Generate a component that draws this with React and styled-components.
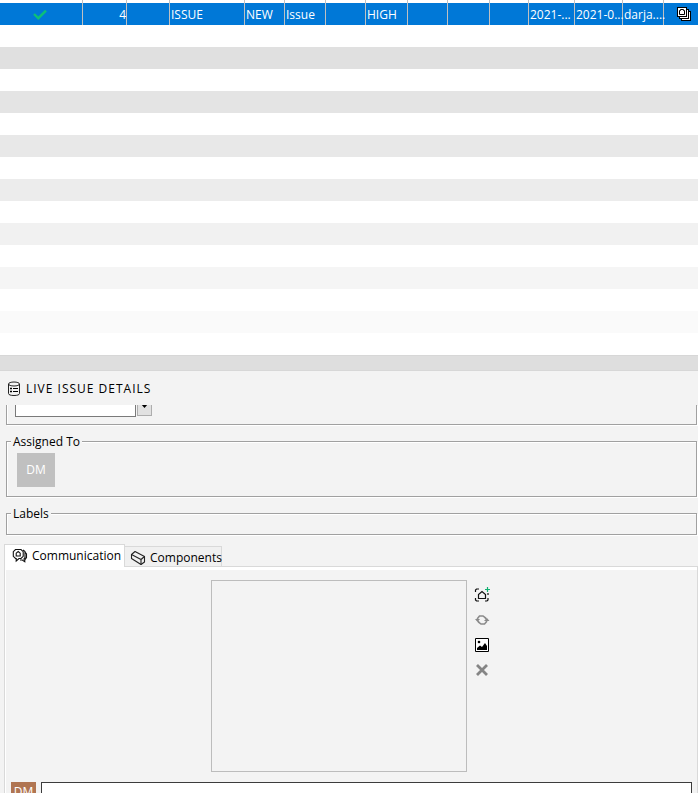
import React from "react";
import styled, { createGlobalStyle } from "styled-components";

const GlobalStyle = createGlobalStyle`
  * { box-sizing: border-box; }
  body {
    margin: 0;
    background: #f3f3f3;
    color: #000;
    font: 12px/16px "Open Sans", "Noto Sans", sans-serif;
  }
  button, input, textarea { font: inherit; }
`;

const Page = styled.div`
  display: flex;
  flex-direction: column;
  height: 100vh;
  overflow: hidden;
`;

const IssueTable = styled.table`
  width: 100%;
  flex: none;
  table-layout: fixed;
  border-collapse: separate;
  border-spacing: 0;
  background: #fff;
`;

const Column = styled.col`
  width: ${(p) => (p.$width ? `${p.$width}px` : "auto")};
`;

const EdgeCell = styled.td`
  height: 3px;
  padding: 0;
  border-right: 1px solid #c0c0c0;
  &:last-child { border-right: 0; }
`;

const IssueCell = styled.td`
  height: 22px;
  padding: 2px 0 0 1px;
  background: #0078d7;
  color: #fff;
  border-right: 1px solid #c0c0c0;
  white-space: nowrap;
  font-size: 12px;
  line-height: 16px;
  text-align: ${(p) => p.$align || "left"};
  &:first-child { padding-right: 4px; }
  &:last-child { border-right: 0; padding-left: 5px; }
  svg { display: block; margin: 0 auto; }
`;

const StripeCell = styled.td`
  height: 22px;
  padding: 0;
  background: ${(p) => p.$shade};
`;

const Splitter = styled.div`
  flex: none;
  height: 16px;
  background: #dedede;
  border-top: 1px solid #d7d7d7;
  border-bottom: 1px solid #d7d7d7;
`;

const TitleBar = styled.header`
  flex: none;
  display: flex;
  align-items: center;
  gap: 5px;
  height: 34px;
  padding: 1px 0 0 7px;
`;

const Title = styled.h1`
  margin: 0;
  font-size: 12px;
  line-height: 16px;
  font-weight: 400;
  letter-spacing: 1px;
`;

const Details = styled.div`
  flex: none;
  display: flex;
  flex-direction: column;
  padding: 0 1px 0 6px;
`;

const Group = styled.fieldset`
  min-width: 0;
  margin: 0;
  padding: 4px 10px 0;
  border: 1px solid #a0a0a0;
  box-shadow: 1px 1px 0 #fff, inset 1px 1px 0 #fff;
`;

const CutGroup = styled(Group)`
  height: 20px;
  padding: 0 8px;
  border-top: 0;
  box-shadow: 1px 1px 0 #fff, inset 1px 0 0 #fff;
`;

const LabelledGroup = styled(Group)`
  height: ${(p) => p.$height}px;
  margin-top: 8px;
`;

const Legend = styled.legend`
  height: 16px;
  margin-left: -6px;
  padding: 0 2px;
  line-height: 18px;
  background: #f3f3f3;
`;

const Combo = styled.div`
  display: flex;
  align-items: flex-end;
  gap: 1px;
  height: 12px;
  overflow: hidden;
`;

const ComboInput = styled.input`
  width: 121px;
  height: 22px;
  border: 1px solid #7a7a7a;
  background: #fff;
  outline: 0;
`;

const ComboButton = styled.button`
  display: flex;
  justify-content: center;
  align-items: center;
  width: 15px;
  height: 21px;
  margin-bottom: 1px;
  padding: 0;
  border: 1px solid #adadad;
  background: #e1e1e1;
`;

const Avatar = styled.div`
  display: flex;
  align-items: center;
  justify-content: center;
  flex: none;
  width: ${(p) => p.$width}px;
  height: ${(p) => p.$height}px;
  background: ${(p) => p.$color};
  color: #fff;
`;

const TabArea = styled.section`
  flex: 1;
  display: flex;
  flex-direction: column;
  min-height: 0;
  padding: 9px 0 0 4px;
`;

const TabList = styled.div`
  display: flex;
  align-items: flex-end;
  height: 22px;
  flex: none;
`;

const Tab = styled.button`
  display: flex;
  align-items: center;
  gap: 4px;
  border: 1px solid #d9d9d9;
  border-bottom: 0;
  white-space: nowrap;
  color: #000;
  padding: ${(p) => (p.$active ? "0 5px 1px 7px" : "2px 2px 0 5px")};
  width: ${(p) => (p.$active ? 121 : 97)}px;
  height: ${(p) => (p.$active ? 23 : 20)}px;
  margin-bottom: ${(p) => (p.$active ? -1 : 0)}px;
  background: ${(p) => (p.$active ? "#fff" : "#f0f0f0")};
  border-left-width: ${(p) => (p.$active ? 1 : 0)}px;
  z-index: 1;
  svg { flex: none; }
`;

const TabPanel = styled.div`
  flex: 1;
  min-height: 0;
  overflow: hidden;
  border: 1px solid #d9d9d9;
  border-bottom: 0;
  box-shadow: inset 1px 3px 0 #fff;
  padding: 13px 5px 0 6px;
`;

const Capture = styled.div`
  display: flex;
  justify-content: center;
  gap: 7px;
  padding-right: 2px;
`;

const Preview = styled.div`
  width: 256px;
  height: 192px;
  border: 1px solid #bcbcbc;
`;

const ToolColumn = styled.div`
  display: flex;
  flex-direction: column;
  gap: 9px;
  padding-top: 7px;
`;

const ToolButton = styled.button`
  display: block;
  width: 16px;
  height: 16px;
  padding: 0;
  border: 0;
  background: none;
  svg { display: block; }
`;

const Composer = styled.div`
  display: flex;
  align-items: flex-start;
  gap: 5px;
  margin-top: 10px;
`;

const MessageInput = styled.textarea`
  flex: 1;
  min-width: 0;
  height: 48px;
  border: 1px solid #3c3c3c;
  background: #fff;
  resize: none;
  outline: 0;
`;

const CheckIcon = () => (
  <svg width="14" height="16" viewBox="0 0 14 16" fill="none" stroke="#0cc077" strokeWidth="2.400">
    <path d="M1 7l4.300 4.200L13 3.600" />
  </svg>
);

const StackIcon = () => (
  <svg width="16" height="16" viewBox="0 0 16 16" fill="#fff" stroke="#000" shapeRendering="crispEdges">
    <path d="M5.500 4.500h9v9h-9z" />
    <path d="M3.500 2.500h9v9h-9z" />
    <path d="M1.500.5h9v9h-9z" />
    <path d="M3.500 7.500v-4h1v-1h3v1h1v4z" shapeRendering="auto" />
  </svg>
);

const DatabaseIcon = () => (
  <svg width="14" height="16" viewBox="0 0 14 16" fill="none" stroke="#222">
    <ellipse cx="7" cy="3" rx="5.500" ry="2" />
    <path d="M1.500 3v9.500c0 1.300 2.200 2 5.500 2s5.500-.7 5.500-2V3" />
    <path d="M6 7.500h5M6 10.500h5" stroke="#000" />
    <path d="M3 7.500h2M3 10.500h2" stroke="#000" strokeWidth="1.600" />
  </svg>
);

const ChatIcon = () => (
  <svg width="16" height="16" viewBox="0 0 16 16" fill="none" stroke="#111" strokeWidth="1.100">
    <path d="M3.500 1.500h5.500l2.200 2.200v4.600L9 10.500H7L4.200 13v-2.500h-.7L1.300 8.300V3.700z" />
    <path d="M4.200 8V5.200l2-1.700 2 1.700V8z" />
    <path d="M11 2l2 1.500v6l-1.500 2M13 4l1.500 2v3.500l-1.700 2.300v2l-2.500-1.800H8" />
  </svg>
);

const BeamIcon = () => (
  <svg width="16" height="16" viewBox="0 0 16 16" fill="none" stroke="#222" strokeWidth="1.100" strokeLinejoin="round">
    <path d="M1.500 4.500l3.500-3 9.500 5v5.500L11 14.500l-9.500-6z" />
    <path d="M1.500 4.500L11 9.500l3.500-3M11 9.500v5" />
  </svg>
);

const ScreenshotIcon = () => (
  <svg width="16" height="16" viewBox="0 0 16 16" fill="none" stroke="#111" strokeWidth="1.200">
    <path d="M1.500 5V3l1-1H5M1.500 11v2l1 1H5M11 14h2l1-1v-2M14 8V6" />
    <path d="M4.500 11.500v-4L8 4.500l3.500 3v4z" />
    <path d="M11 2.500h5M13.500 0v5" stroke="#10b070" />
  </svg>
);

const RefreshIcon = () => (
  <svg width="16" height="16" viewBox="0 0 16 16" fill="none" stroke="#8a8a8a" strokeWidth="1.600">
    <path d="M3.500 8.500V6.500l2-2.500H9l2.500 2v1M12.500 8.500v1.200L10.500 12H7L4.500 10V9" />
    <path d="M1 7h5L3.500 10zM10 9h5.500L12.800 5.800z" fill="#8a8a8a" stroke="none" />
  </svg>
);

const PictureIcon = () => (
  <svg width="16" height="16" viewBox="0 0 16 16">
    <path d="M1.500 1.500h13v13h-13z" fill="#fff" stroke="#000" />
    <path d="M3 13v-2l3-2.500L8 10l3-4 2 3v4z" fill="#000" />
    <circle cx="5" cy="5" r="1.300" fill="#000" />
  </svg>
);

const RemoveIcon = () => (
  <svg width="16" height="16" viewBox="0 0 16 16" fill="none" stroke="#858585" strokeWidth="2.800">
    <path d="M3 3l10 10M13 3L3 13" />
  </svg>
);

const ArrowIcon = () => (
  <svg width="7" height="4" viewBox="0 0 7 4">
    <path d="M0 0h7L3.500 4z" fill="#000" />
  </svg>
);

const columns = [83, 44, 43, 75, 40, 41, 40, 42, 40, 42, 39, 46, 48, 41, 0];
const issue = [
  <CheckIcon />, "4", "", "ISSUE", "NEW", "Issue", "", "HIGH", "", "", "",
  "2021-...", "2021-0...", "darja....", <StackIcon />,
];
const stripes = [
  "#fff", "#e0e0e0", "#fff", "#e4e4e4", "#fff", "#e8e8e8", "#fff", "#ececec",
  "#fff", "#f1f1f1", "#fff", "#f5f5f5", "#fff", "#fafafa", "#fff",
];
const tools = [
  ["Capture view", ScreenshotIcon],
  ["Refresh", RefreshIcon],
  ["Choose picture", PictureIcon],
  ["Remove picture", RemoveIcon],
];

export default function App() {
  return (
    <Page>
      <GlobalStyle />
      <IssueTable>
        <colgroup>
          {columns.map((width, i) => <Column key={i} $width={width} />)}
        </colgroup>
        <tbody>
          <tr>{columns.map((_, i) => <EdgeCell key={i} />)}</tr>
          <tr>
            {issue.map((value, i) => (
              <IssueCell key={i} $align={i === 1 ? "right" : "left"}>{value}</IssueCell>
            ))}
          </tr>
          {stripes.map((shade, i) => (
            <tr key={i}><StripeCell colSpan={columns.length} $shade={shade} /></tr>
          ))}
        </tbody>
      </IssueTable>
      <Splitter />
      <TitleBar>
        <DatabaseIcon />
        <Title>LIVE ISSUE DETAILS</Title>
      </TitleBar>
      <Details>
        <CutGroup>
          <Combo>
            <ComboInput aria-label="Value" />
            <ComboButton aria-label="Open list"><ArrowIcon /></ComboButton>
          </Combo>
        </CutGroup>
        <LabelledGroup $height={64}>
          <Legend>Assigned To</Legend>
          <Avatar $width={38} $height={34} $color="#c0c0c0">DM</Avatar>
        </LabelledGroup>
        <LabelledGroup $height={30}>
          <Legend>Labels</Legend>
        </LabelledGroup>
      </Details>
      <TabArea>
        <TabList role="tablist">
          <Tab role="tab" aria-selected="true" $active><ChatIcon />Communication</Tab>
          <Tab role="tab" aria-selected="false"><BeamIcon />Components</Tab>
        </TabList>
        <TabPanel role="tabpanel">
          <Capture>
            <Preview />
            <ToolColumn>
              {tools.map(([name, Icon]) => (
                <ToolButton key={name} aria-label={name}><Icon /></ToolButton>
              ))}
            </ToolColumn>
          </Capture>
          <Composer>
            <Avatar $width={25} $height={20} $color="#b07552">DM</Avatar>
            <MessageInput aria-label="Message" />
          </Composer>
        </TabPanel>
      </TabArea>
    </Page>
  );
}
